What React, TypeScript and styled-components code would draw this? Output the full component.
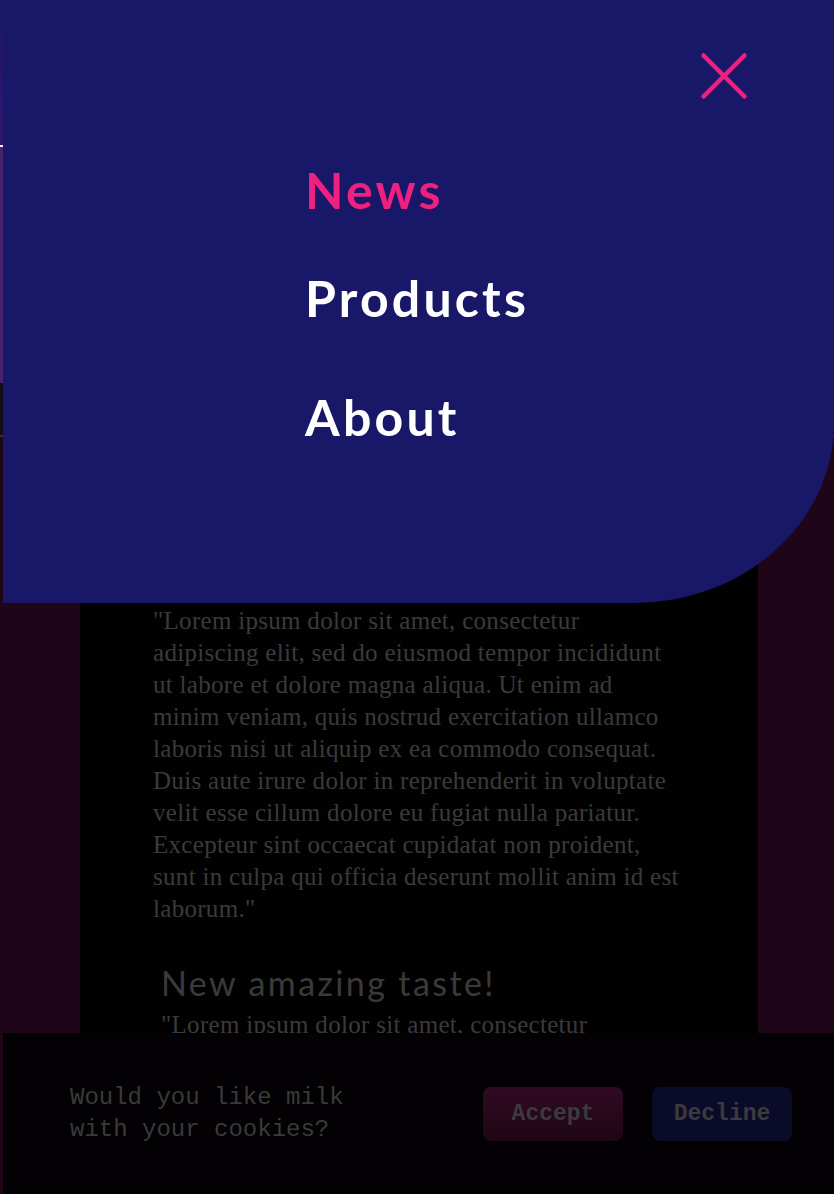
import React from "react";
import styled, { createGlobalStyle } from "styled-components";

const Global = createGlobalStyle`
  html, body { margin: 0; padding: 0; background: #1e0618; }
  body { font-family: "Liberation Serif", serif; }
  * { box-sizing: border-box; }
`;

const Page = styled.div`
  position: relative;
  width: 834px;
  height: 1194px;
  overflow: hidden;
  background: #1e0618;
`;

const Header = styled.header`
  height: 147px;
  background: linear-gradient(180deg, #1a1766 0%, #2a1570 70%, #2e166f 100%);
  border-bottom: 2px solid #f4f0f8;
`;

const Hero = styled.section`
  height: 236px;
  background: #4a2070;
`;

const SubNav = styled.nav`
  height: 54px;
  background: #140c18;
  border-bottom: 2px solid #353038;
`;

const Main = styled.main`
  display: flex;
  padding-left: 80px;
`;

const Column = styled.article`
  width: 678px;
  background: #020102;
  padding-top: 168px;
  min-height: 760px;
`;

const Paragraph = styled.p<{ $indent: number }>`
  margin: 0 0 0 ${(p) => p.$indent}px;
  font-family: "Liberation Serif", serif;
  font-size: 25px;
  line-height: 32px;
  letter-spacing: 0.3px;
  color: #3b3a3b;
  white-space: nowrap;
`;

const Heading = styled.h2`
  margin: 38px 0 6px 81px;
  font-family: Lato, "Noto Sans", sans-serif;
  font-weight: 400;
  font-size: 34px;
  line-height: 40px;
  letter-spacing: 2.4px;
  color: #3b3a3b;
`;

const Menu = styled.div`
  position: absolute;
  top: 0;
  left: 3px;
  right: 0;
  height: 603px;
  background: #181768;
  border-bottom-right-radius: 200px 180px;
  display: flex;
  flex-direction: column;
`;

const MenuTop = styled.div`
  display: flex;
  justify-content: flex-end;
  padding: 52px 86px 0 0;
`;

const CloseButton = styled.button`
  width: 48px;
  height: 48px;
  padding: 0;
  border: none;
  background: transparent;
  cursor: pointer;
  display: flex;
`;

const NavList = styled.ul`
  list-style: none;
  margin: 0;
  padding: 60px 0 0 302px;
  display: flex;
  flex-direction: column;
`;

const NavItem = styled.li<{ $active?: boolean; $space: number }>`
  margin-top: ${(p) => p.$space}px;
  font-family: Lato, "Noto Sans", sans-serif;
  font-weight: 700;
  font-size: 50px;
  line-height: 60px;
  letter-spacing: 3.2px;
  color: ${(p) => (p.$active ? "#ee2080" : "#ffffff")};
`;

const Banner = styled.div`
  position: absolute;
  left: 3px;
  right: 0;
  bottom: 0;
  height: 161px;
  background: #030103;
  display: flex;
  align-items: center;
  padding: 0 42px 0 67px;
`;

const BannerText = styled.p`
  margin: 0;
  flex: 1;
  font-family: "Liberation Mono", monospace;
  font-size: 24px;
  line-height: 32px;
  color: #3a3a3a;
`;

const Buttons = styled.div`
  display: flex;
  gap: 29px;
`;

const BannerButton = styled.button<{ $variant: "accept" | "decline" }>`
  width: 140px;
  height: 54px;
  border: none;
  border-radius: 8px;
  font-family: "Liberation Mono", monospace;
  font-weight: 700;
  font-size: 23px;
  color: #3c3a3d;
  background: ${(p) =>
    p.$variant === "accept"
      ? "linear-gradient(180deg, #300a22 0%, #1e0613 100%)"
      : "#0a0b29"};
`;

const lorem1 = [
  "\"Lorem ipsum dolor sit amet, consectetur",
  "adipiscing elit, sed do eiusmod tempor incididunt",
  "ut labore et dolore magna aliqua. Ut enim ad",
  "minim veniam, quis nostrud exercitation ullamco",
  "laboris nisi ut aliquip ex ea commodo consequat.",
  "Duis aute irure dolor in reprehenderit in voluptate",
  "velit esse cillum dolore eu fugiat nulla pariatur.",
  "Excepteur sint occaecat cupidatat non proident,",
  "sunt in culpa qui officia deserunt mollit anim id est",
  "laborum.\"",
];

const renderLines = (lines: string[]) =>
  lines.map((l, i) => (
    <React.Fragment key={i}>
      {l}
      {i < lines.length - 1 && <br />}
    </React.Fragment>
  ));

export default function App() {
  return (
    <>
      <Global />
      <Page>
        <Header />
        <Hero />
        <SubNav />
        <Main>
          <Column>
            <Paragraph $indent={73}>{renderLines(lorem1)}</Paragraph>
            <Heading>New amazing taste!</Heading>
            <Paragraph $indent={81}>"Lorem ipsum dolor sit amet, consectetur</Paragraph>
          </Column>
        </Main>

        <Menu>
          <MenuTop>
            <CloseButton aria-label="Close menu">
              <svg width="48" height="48" viewBox="0 0 48 48">
                <path
                  d="M3.5 3.5 L44.5 44.5 M44.5 3.5 L3.5 44.5"
                  stroke="#ee2080"
                  strokeWidth="4.5"
                  strokeLinecap="round"
                  fill="none"
                />
              </svg>
            </CloseButton>
          </MenuTop>
          <NavList>
            <NavItem $active $space={0}>News</NavItem>
            <NavItem $space={48}>Products</NavItem>
            <NavItem $space={59}>About</NavItem>
          </NavList>
        </Menu>

        <Banner>
          <BannerText>
            Would you like milk
            <br />
            with your cookies?
          </BannerText>
          <Buttons>
            <BannerButton $variant="accept">Accept</BannerButton>
            <BannerButton $variant="decline">Decline</BannerButton>
          </Buttons>
        </Banner>
      </Page>
    </>
  );
}
